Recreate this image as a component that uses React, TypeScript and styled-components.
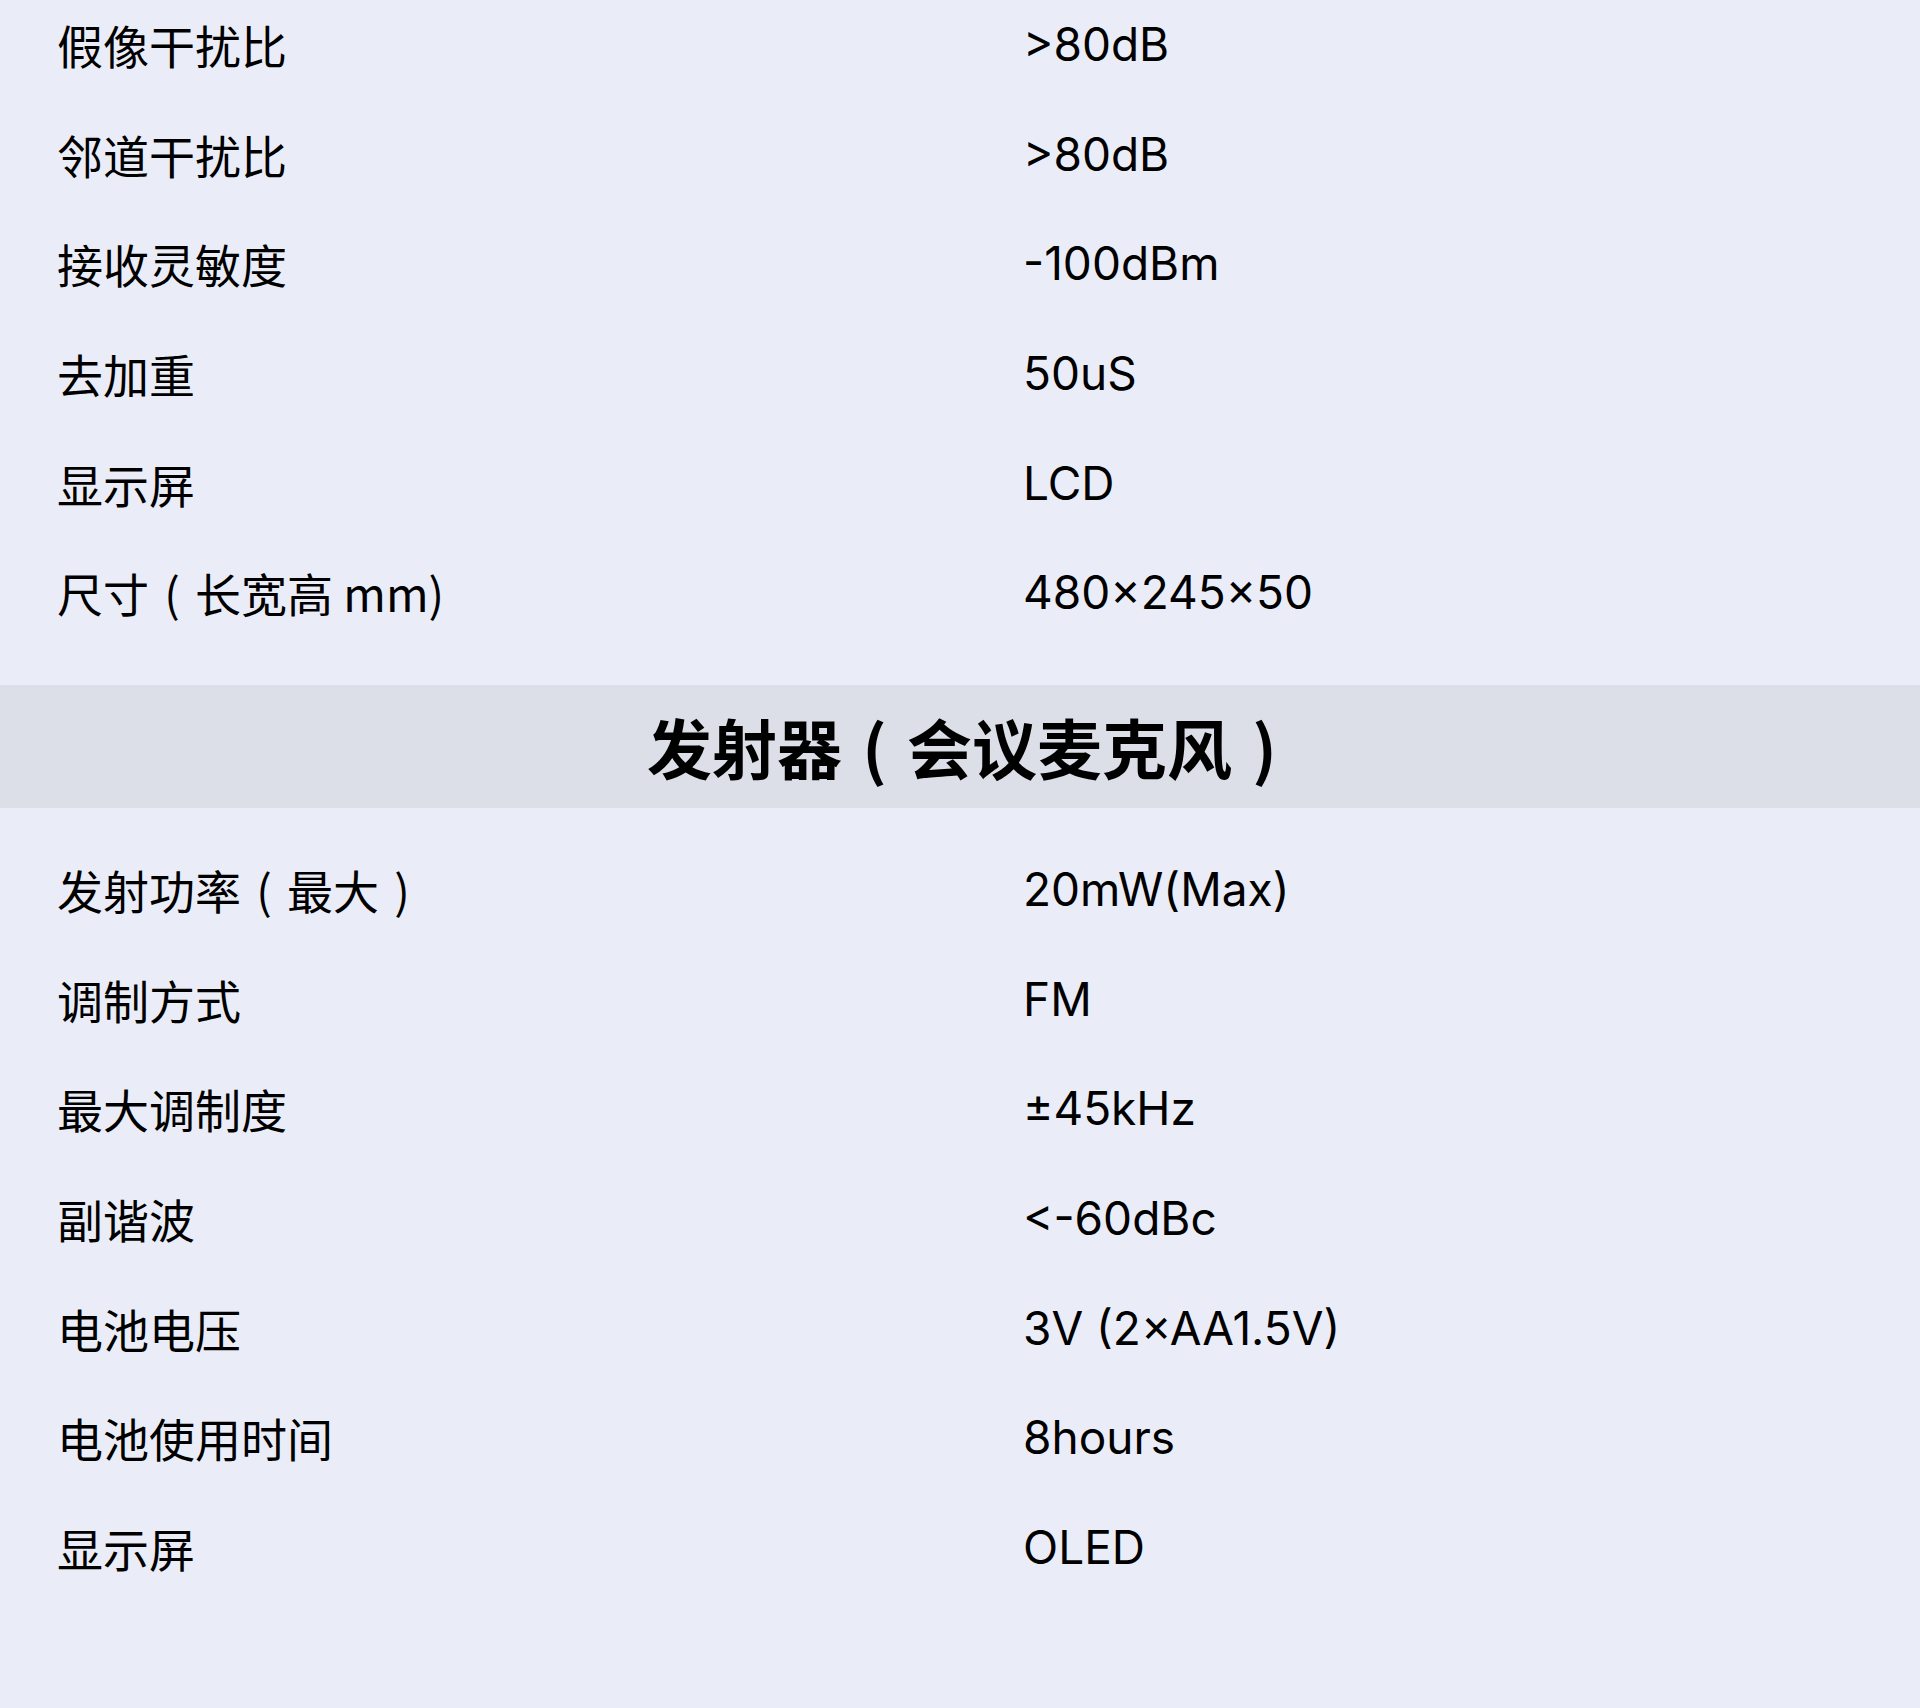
import { FC, ReactNode } from 'react'
import styled, { createGlobalStyle } from 'styled-components'

const GlobalStyle = createGlobalStyle`
  html, body {
    margin: 0;
    padding: 0;
    background: #eaedf7;
  }
`

const Page = styled.div`
  width: 1920px;
  height: 1708px;
  overflow: hidden;
  background: #eaedf7;
  color: #000;
`

const List = styled.div<{ $top: number; $bottom: number }>`
  display: flex;
  flex-direction: column;
  margin-top: ${p => p.$top}px;
  padding-bottom: ${p => p.$bottom}px;
`

const Row = styled.div`
  display: grid;
  grid-template-columns: 966px 1fr;
  align-items: center;
  height: 109.7px;
  padding-left: 57px;
`

const Label = styled.div`
  font-family: "Noto Sans CJK SC", sans-serif;
  font-size: 46px;
  font-weight: 400;
  line-height: 1;
  white-space: nowrap;
`

const Value = styled.div`
  font-family: Inter, "Noto Sans CJK SC", sans-serif;
  font-size: 46px;
  font-weight: 400;
  line-height: 1;
  white-space: nowrap;
`

// full-width bracket drawn centred in its em box
const Paren = styled.span`
  display: inline-block;
  width: 1em;
  text-align: center;
`

const Band = styled.div`
  display: flex;
  justify-content: center;
  align-items: center;
  height: 123px;
  background: #dcdfe8;
`

const BandTitle = styled.h2`
  margin: 0 0 0 24px;
  font-family: "Noto Sans CJK SC", sans-serif;
  font-size: 65px;
  font-weight: 700;
  line-height: 1;
`

const withParens = (text: string): ReactNode[] =>
  text.split(/([（）])/).filter(Boolean).map((part, i) =>
    part === '（' ? <Paren key={i}>(</Paren>
      : part === '）' ? <Paren key={i}>)</Paren>
      : part
  )

const receiver: [string, string][] = [
  ['假像干扰比', '>80dB'],
  ['邻道干扰比', '>80dB'],
  ['接收灵敏度', '-100dBm'],
  ['去加重', '50uS'],
  ['显示屏', 'LCD'],
  ['尺寸（长宽高 mm)', '480×245×50'],
]

const transmitter: [string, string][] = [
  ['发射功率（最大）', '20mW(Max)'],
  ['调制方式', 'FM'],
  ['最大调制度', '±45kHz'],
  ['副谐波', '<-60dBc'],
  ['电池电压', '3V (2×AA1.5V)'],
  ['电池使用时间', '8hours'],
  ['显示屏', 'OLED'],
]

const SpecRows: FC<{ items: [string, string][] }> = ({ items }) => (
  <>
    {items.map(([k, v], i) => (
      <Row key={i}>
        <Label>{withParens(k)}</Label>
        <Value>{v}</Value>
      </Row>
    ))}
  </>
)

const App: FC = () => (
  <Page>
    <GlobalStyle />
    <List $top={-11} $bottom={38}>
      <SpecRows items={receiver} />
    </List>
    <Band>
      <BandTitle>{withParens('发射器（会议麦克风）')}</BandTitle>
    </Band>
    <List $top={26} $bottom={0}>
      <SpecRows items={transmitter} />
    </List>
  </Page>
)

export default App
